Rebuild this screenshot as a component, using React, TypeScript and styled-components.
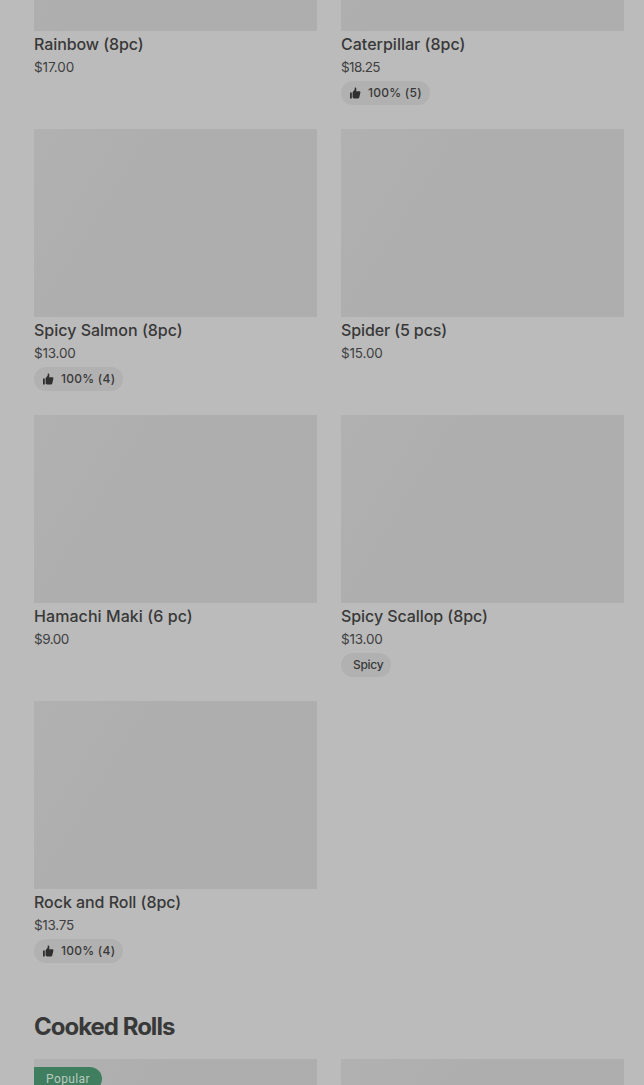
import React from "react";
import styled, { createGlobalStyle } from "styled-components";

const GlobalStyle = createGlobalStyle`
  body {
    margin: 0;
    background: #bbbbbb;
    color: #383838;
    font-family: Inter, "Liberation Sans", sans-serif;
  }
`;

const Page = styled.main`
  box-sizing: border-box;
  height: 1085px;
  padding: 0 20px 0 34px;
  overflow: hidden;
`;

const Grid = styled.section<{ $offset?: number }>`
  display: grid;
  grid-template-columns: repeat(2, 283px);
  grid-auto-rows: 262px;
  gap: 24px;
  margin-top: ${(p) => p.$offset ?? 0}px;
`;

const Card = styled.article`
  display: flex;
  flex-direction: column;
  align-items: flex-start;
`;

const Photo = styled.div`
  box-sizing: border-box;
  width: 100%;
  height: 188px;
  padding-top: 8px;
  background: linear-gradient(122deg, #b1b1b1 0%, #aeaeae 36%, #aeaeae 100%);
`;

const Name = styled.h3<{ $tracking: number }>`
  margin: 3px 0 0;
  font-size: 16px;
  font-weight: 500;
  line-height: 21px;
  letter-spacing: ${(p) => p.$tracking}px;
  white-space: nowrap;
`;

const Price = styled.div<{ $tracking: number }>`
  margin-top: 2px;
  color: #404040;
  font-size: 13.5px;
  line-height: 20px;
  letter-spacing: ${(p) => p.$tracking}px;
`;

const Pill = styled.div<{ $plain?: boolean }>`
  box-sizing: border-box;
  display: flex;
  align-items: center;
  gap: 7px;
  width: ${(p) => (p.$plain ? 50 : 89)}px;
  height: 24px;
  margin-top: 4px;
  padding-left: ${(p) => (p.$plain ? 12 : 8)}px;
  border-radius: 12px;
  background: #b1b1b1;
  font-size: 12px;
  font-weight: 500;
  line-height: 24px;
  letter-spacing: ${(p) => (p.$plain ? -0.3 : 0.25)}px;
  white-space: nowrap;
`;

const Heading = styled.h2`
  margin: 48px 0 0;
  font-size: 24px;
  font-weight: 700;
  line-height: 32px;
  letter-spacing: -1px;
`;

const Popular = styled.div`
  box-sizing: border-box;
  width: 68px;
  height: 24px;
  padding-left: 12px;
  border-radius: 0 12px 12px 0;
  background: #3f7f5f;
  color: #b9c9c0;
  font-family: Roboto, sans-serif;
  font-size: 12px;
  line-height: 24px;
  letter-spacing: 0.4px;
`;

const ThumbUp = () => (
  <svg width="12" height="12" viewBox="0 0 12 12" fill="#303030" aria-hidden="true">
    <path d="M1 5.5h1.8v6H1z" />
    <path d="M3.6 5.2 5.7 2.6V.9c0-.5.8-.6 1.2-.2.6.6.6 2 .2 3.5h3.2c.8 0 1.3.6 1.1 1.4l-1.1 4.7c-.2.8-.7 1.2-1.5 1.2H5.1c-.7 0-1.5-.5-1.5-1.2z" />
  </svg>
);

interface Item {
  name: string;
  tracking: number;
  price: string;
  priceTracking: number;
  rating?: string;
  tag?: string;
}

const items: Item[] = [
  { name: "Rainbow (8pc)", tracking: -0.08, price: "$17.00", priceTracking: -0.1 },
  { name: "Caterpillar (8pc)", tracking: 0.01, price: "$18.25", priceTracking: -0.6, rating: "100% (5)" },
  { name: "Spicy Salmon (8pc)", tracking: 0, price: "$13.00", priceTracking: -0.2, rating: "100% (4)" },
  { name: "Spider (5 pcs)", tracking: -0.12, price: "$15.00", priceTracking: -0.15 },
  { name: "Hamachi Maki (6 pc)", tracking: 0.07, price: "$9.00", priceTracking: -0.5 },
  { name: "Spicy Scallop (8pc)", tracking: -0.07, price: "$13.00", priceTracking: -0.2, tag: "Spicy" },
  { name: "Rock and Roll (8pc)", tracking: -0.05, price: "$13.75", priceTracking: -0.3, rating: "100% (4)" },
];

export default function App() {
  return (
    <>
      <GlobalStyle />
      <Page>
        <Grid $offset={-157}>
          {items.map((item) => (
            <Card key={item.name}>
              <Photo />
              <Name $tracking={item.tracking}>{item.name}</Name>
              <Price $tracking={item.priceTracking}>{item.price}</Price>
              {item.rating && (
                <Pill>
                  <ThumbUp />
                  {item.rating}
                </Pill>
              )}
              {item.tag && <Pill $plain>{item.tag}</Pill>}
            </Card>
          ))}
        </Grid>
        <Heading>Cooked Rolls</Heading>
        <Grid $offset={16}>
          <Card>
            <Photo>
              <Popular>Popular</Popular>
            </Photo>
          </Card>
          <Card>
            <Photo />
          </Card>
        </Grid>
      </Page>
    </>
  );
}
